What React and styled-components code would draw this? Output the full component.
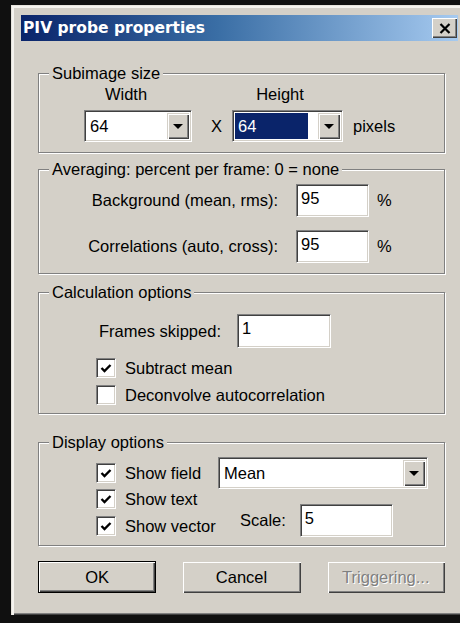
import React from 'react';
import styled, { createGlobalStyle } from 'styled-components';

const GlobalStyle = createGlobalStyle`
  html, body { margin: 0; padding: 0; }
  body {
    background: #0f0f0f;
    font-family: "Liberation Sans", Arial, sans-serif;
    font-size: 16.5px;
    color: #000;
    overflow: hidden;
  }
`;

const Desktop = styled.div`
  width: 460px;
  height: 623px;
  box-sizing: border-box;
  padding: 5px 0 0 11px;
  background: #101010;
`;

const Window = styled.div`
  width: 449px;
  height: 610px;
  box-sizing: border-box;
  padding: 10px 2px 0 10px;
  background: #d4d0c8;
  box-shadow: inset 1px 1px 0 #e6e3dc, inset 3px 3px 0 #f4f2ee,
    inset 0 -1px 0 #404040, inset 0 -2px 0 #808080;
`;

const TitleBar = styled.div`
  height: 26px;
  display: flex;
  align-items: center;
  justify-content: space-between;
  padding: 0 1px 0 2px;
  background: linear-gradient(to right, #0a246a 0%, #3a6ea5 45%, #a6caf0 100%);
`;

const TitleText = styled.span`
  font-family: "DejaVu Sans", Verdana, sans-serif;
  font-weight: bold;
  font-size: 15.5px;
  color: #fff;
  letter-spacing: 0;
`;

const CloseBtn = styled.div`
  width: 25px;
  height: 20px;
  box-sizing: border-box;
  display: flex;
  align-items: center;
  justify-content: center;
  background: #d4d0c8;
  box-shadow: inset 1px 1px 0 #fff, inset -1px -1px 0 #404040, inset -2px -2px 0 #808080;
`;

const Client = styled.div`
  padding: 23px 13px 0 17px;
`;

const Group = styled.fieldset`
  margin: ${p => p.$top || 0}px 0 0;
  padding: ${p => p.$pad};
  border: 1px solid #808080;
  box-shadow: 1px 1px 0 #fff, inset 1px 1px 0 #fff;
  min-inline-size: 0;
`;

const Legend = styled.legend`
  margin-left: 10px;
  padding: 0 3px;
  line-height: 18px;
  background: #d4d0c8;
`;

const HeadRow = styled.div`
  display: flex;
  height: 18px;
  line-height: 18px;
  padding-left: 47px;
  gap: 74px;
`;

const ColHead = styled.div`
  width: 80px;
  text-align: center;
`;

const Row = styled.div`
  display: flex;
  align-items: center;
  margin-top: ${p => p.$top || 0}px;
  padding-left: ${p => p.$left || 0}px;
`;

const Combo = styled.div`
  width: ${p => p.$w}px;
  height: 32px;
  box-sizing: border-box;
  display: flex;
  padding: 2px;
  background: #fff;
  border: 1px solid;
  border-color: #808080 #fff #fff #808080;
  box-shadow: inset 1px 1px 0 #404040, inset -1px -1px 0 #d4d0c8;
`;

const ComboText = styled.div`
  flex: 1;
  display: flex;
  align-items: center;
`;

const ComboValue = styled.span`
  padding: 0 ${p => (p.$selected ? 52 : 3)}px 0 3px;
  line-height: 26px;
  background: ${p => (p.$selected ? '#0a246a' : 'transparent')};
  color: ${p => (p.$selected ? '#fff' : '#000')};
`;

const DropBtn = styled.div`
  width: 22px;
  box-sizing: border-box;
  display: flex;
  align-items: center;
  justify-content: center;
  background: #d4d0c8;
  box-shadow: inset 1px 1px 0 #d4d0c8, inset 2px 2px 0 #fff,
    inset -1px -1px 0 #404040, inset -2px -2px 0 #808080;
`;

const Arrow = styled.div`
  width: 0;
  height: 0;
  border-left: 5px solid transparent;
  border-right: 5px solid transparent;
  border-top: 5px solid #000;
  margin-top: 1px;
`;

const Edit = styled.div`
  width: ${p => p.$w}px;
  height: ${p => p.$h || 33}px;
  box-sizing: border-box;
  padding: 2px 4px;
  line-height: 22px;
  background: #fff;
  border: 1px solid;
  border-color: #808080 #fff #fff #808080;
  box-shadow: inset 1px 1px 0 #404040, inset -1px -1px 0 #d4d0c8;
`;

const Label = styled.span`
  white-space: nowrap;
  width: ${p => (p.$w ? `${p.$w}px` : 'auto')};
  text-align: ${p => p.$align || 'left'};
  margin-left: ${p => p.$ml || 0}px;
  margin-right: ${p => p.$mr || 0}px;
  flex-shrink: 0;
`;

const CheckRow = styled.label`
  display: flex;
  align-items: center;
  height: 20px;
  gap: 9px;
  white-space: nowrap;
  margin-top: ${p => p.$top || 0}px;
`;

const Box = styled.span`
  width: 20px;
  height: 20px;
  box-sizing: border-box;
  display: flex;
  align-items: center;
  justify-content: center;
  background: #fff;
  border: 1px solid;
  border-color: #808080 #fff #fff #808080;
  box-shadow: inset 1px 1px 0 #404040, inset -1px -1px 0 #d4d0c8;
  flex-shrink: 0;
`;

const Stack = styled.div`
  display: flex;
  flex-direction: column;
  padding-left: ${p => p.$left || 0}px;
  padding-top: ${p => p.$top || 0}px;
  width: ${p => (p.$w ? `${p.$w}px` : 'auto')};
  box-sizing: border-box;
  flex-shrink: 0;
`;

const Split = styled.div`
  display: flex;
  align-items: flex-start;
`;

const ButtonRow = styled.div`
  display: flex;
  gap: 26px;
  margin-top: 15px;
`;

const Button = styled.div`
  width: 119px;
  height: 32px;
  box-sizing: border-box;
  display: flex;
  align-items: center;
  justify-content: center;
  background: #d4d0c8;
  color: ${p => (p.$disabled ? '#808080' : '#000')};
  text-shadow: ${p => (p.$disabled ? '1px 1px 0 #fff' : 'none')};
  border: ${p => (p.$default ? '1px solid #000' : 'none')};
  box-shadow: ${p =>
    p.$default
      ? 'inset 1px 1px 0 #fff, inset -1px -1px 0 #404040, inset -2px -2px 0 #808080'
      : 'inset 1px 1px 0 #d4d0c8, inset 2px 2px 0 #fff, inset -1px -1px 0 #404040, inset -2px -2px 0 #808080'};
`;

const Tick = () => (
  <svg width="12" height="11" viewBox="0 0 12 11">
    <path d="M1.5 5 L4.5 8 L10.5 2" fill="none" stroke="#000" strokeWidth="2.4" />
  </svg>
);

const CloseGlyph = () => (
  <svg width="12" height="11" viewBox="0 0 12 11">
    <path d="M1.5 1 L10.5 10 M10.5 1 L1.5 10" stroke="#000" strokeWidth="2.2" />
  </svg>
);

function Check({ checked, children, top }) {
  return (
    <CheckRow $top={top}>
      <Box>{checked && <Tick />}</Box>
      {children}
    </CheckRow>
  );
}

function DropDown({ w, value, selected }) {
  return (
    <Combo $w={w}>
      <ComboText>
        <ComboValue $selected={selected}>{value}</ComboValue>
      </ComboText>
      <DropBtn>
        <Arrow />
      </DropBtn>
    </Combo>
  );
}

export default function App() {
  return (
    <>
      <GlobalStyle />
      <Desktop>
        <Window>
          <TitleBar>
            <TitleText>PIV probe properties</TitleText>
            <CloseBtn>
              <CloseGlyph />
            </CloseBtn>
          </TitleBar>

          <Client>
            <Group $pad="3px 0 10px">
              <Legend>Subimage size</Legend>
              <HeadRow>
                <ColHead>Width</ColHead>
                <ColHead>Height</ColHead>
              </HeadRow>
              <Row $top={7} $left={45}>
                <DropDown w={108} value="64" />
                <Label $ml={19} $mr={10}>X</Label>
                <DropDown w={111} value="64" selected />
                <Label $ml={10}>pixels</Label>
              </Row>
            </Group>

            <Group $top={7} $pad="6px 0 10px">
              <Legend>Averaging: percent per frame: 0 = none</Legend>
              <Row>
                <Label $w={239} $align="right" $mr={18}>Background (mean, rms):</Label>
                <Edit $w={73}>95</Edit>
                <Label $ml={8}>%</Label>
              </Row>
              <Row $top={13}>
                <Label $w={239} $align="right" $mr={18}>Correlations (auto, cross):</Label>
                <Edit $w={73}>95</Edit>
                <Label $ml={8}>%</Label>
              </Row>
            </Group>

            <Group $top={9} $pad="13px 0 8px">
              <Legend>Calculation options</Legend>
              <Row $left={60}>
                <Label $mr={16}>Frames skipped:</Label>
                <Edit $w={94} $h={34}>1</Edit>
              </Row>
              <Stack $left={57} $top={10}>
                <Check checked>Subtract mean</Check>
                <Check top={7}>Deconvolve autocorrelation</Check>
              </Stack>
            </Group>

            <Group $top={19} $pad="6px 0 8px">
              <Legend>Display options</Legend>
              <Split>
                <Stack $left={57} $top={6} $w={179}>
                  <Check checked>Show field</Check>
                  <Check checked top={6}>Show text</Check>
                  <Check checked top={7}>Show vector</Check>
                </Stack>
                <Stack>
                  <DropDown w={210} value="Mean" />
                  <Row $top={15} $left={22}>
                    <Label $mr={14}>Scale:</Label>
                    <Edit $w={93}>5</Edit>
                  </Row>
                </Stack>
              </Split>
            </Group>

            <ButtonRow>
              <Button $default>OK</Button>
              <Button>Cancel</Button>
              <Button $disabled>Triggering...</Button>
            </ButtonRow>
          </Client>
        </Window>
      </Desktop>
    </>
  );
}
